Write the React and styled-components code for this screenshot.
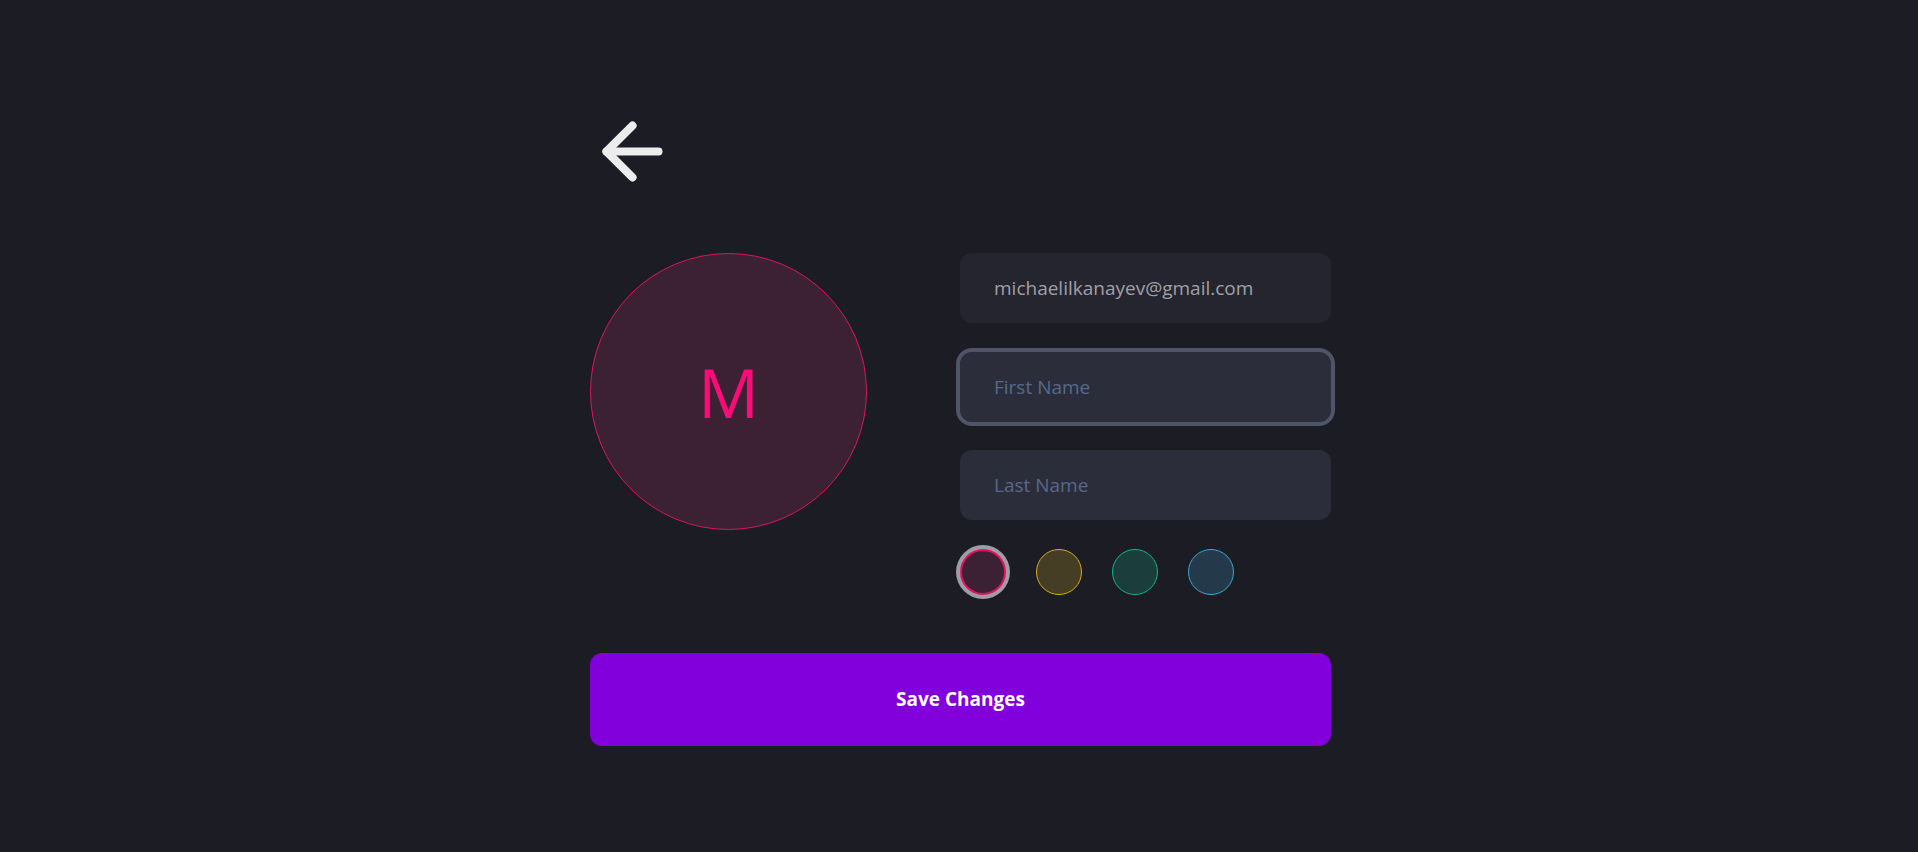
import React, { useState } from 'react';
import styled, { createGlobalStyle } from 'styled-components';
import { ArrowLeft } from 'lucide-react';

const GlobalStyle = createGlobalStyle`
  html, body {
    margin: 0;
    padding: 0;
    background: #1c1d24;
    font-family: "Open Sans", "Noto Sans", sans-serif;
  }
`;

const COLORS = [
  { key: 'pink', fill: '#3b2133', stroke: '#e0135f', text: '#ff0a78' },
  { key: 'yellow', fill: '#463d25', stroke: '#d9ad12' },
  { key: 'teal', fill: '#1b3d3b', stroke: '#12b58f' },
  { key: 'blue', fill: '#243a4b', stroke: '#3aa8d2' },
];

const Page = styled.div`
  min-height: 852px;
  background: #1c1d24;
`;

const Container = styled.div`
  width: 741px;
  margin: 0 auto;
  padding: 107px 0 0 3px;
  display: flex;
  flex-direction: column;
`;

const BackButton = styled.button`
  width: 89px;
  height: 89px;
  padding: 0;
  margin-left: -2px;
  border: none;
  background: none;
  color: #ececec;
  cursor: pointer;
  display: flex;
`;

const ProfileRow = styled.div`
  display: flex;
  align-items: flex-start;
  gap: 93px;
  margin-top: 57px;
`;

const Avatar = styled.div`
  width: 277px;
  height: 277px;
  flex-shrink: 0;
  box-sizing: border-box;
  border-radius: 50%;
  border: 1px solid ${props => props.stroke};
  background: ${props => props.fill};
  color: ${props => props.text};
  display: flex;
  align-items: center;
  justify-content: center;
  font-size: 68px;
  font-weight: 400;
`;

const Form = styled.div`
  width: 371px;
  display: flex;
  flex-direction: column;
  gap: 28.5px;
`;

const Field = styled.input`
  height: 70px;
  box-sizing: border-box;
  padding: 0 34px;
  border: none;
  border-radius: 12px;
  background: ${props => (props.disabled ? '#25252f' : '#2c2d3b')};
  color: ${props => (props.disabled ? '#a0a0a6' : '#d8d8e0')};
  font-family: "Open Sans", "Noto Sans", sans-serif;
  font-size: 19px;
  outline: ${props => (props.focused ? '4px solid #4f5566' : 'none')};
  outline-offset: 0;

  &::placeholder {
    color: #56698a;
  }
`;

const Swatches = styled.div`
  display: flex;
  gap: 30px;
`;

const Swatch = styled.button`
  width: 46px;
  height: 46px;
  padding: 0;
  box-sizing: border-box;
  border-radius: 50%;
  border: ${props => (props.selected ? '2px' : '1.5px')} solid ${props => props.stroke};
  background: ${props => props.fill};
  box-shadow: ${props => (props.selected ? '0 0 0 4px #9d9da3' : 'none')};
  cursor: pointer;
`;

const SaveButton = styled.button`
  margin-top: 58px;
  height: 93px;
  border: none;
  border-radius: 12px;
  background: #8200dc;
  color: #ffffff;
  font-family: "Open Sans", "Noto Sans", sans-serif;
  font-size: 19px;
  font-weight: 700;
  cursor: pointer;
`;

export default function App() {
  const [selected, setSelected] = useState('pink');
  const color = COLORS.find(c => c.key === selected);

  return (
    <Page>
      <GlobalStyle />
      <Container>
        <BackButton aria-label="Back">
          <ArrowLeft size={89} strokeWidth={2.2} />
        </BackButton>
        <ProfileRow>
          <Avatar fill={color.fill} stroke={color.stroke} text={COLORS[0].text}>M</Avatar>
          <Form>
            <Field disabled value="michaelilkanayev@gmail.com" readOnly />
            <Field placeholder="First Name" focused />
            <Field placeholder="Last Name" />
            <Swatches>
              {COLORS.map(c => (
                <Swatch
                  key={c.key}
                  fill={c.fill}
                  stroke={c.stroke}
                  selected={c.key === selected}
                  onClick={() => setSelected(c.key)}
                />
              ))}
            </Swatches>
          </Form>
        </ProfileRow>
        <SaveButton>Save Changes</SaveButton>
      </Container>
    </Page>
  );
}
